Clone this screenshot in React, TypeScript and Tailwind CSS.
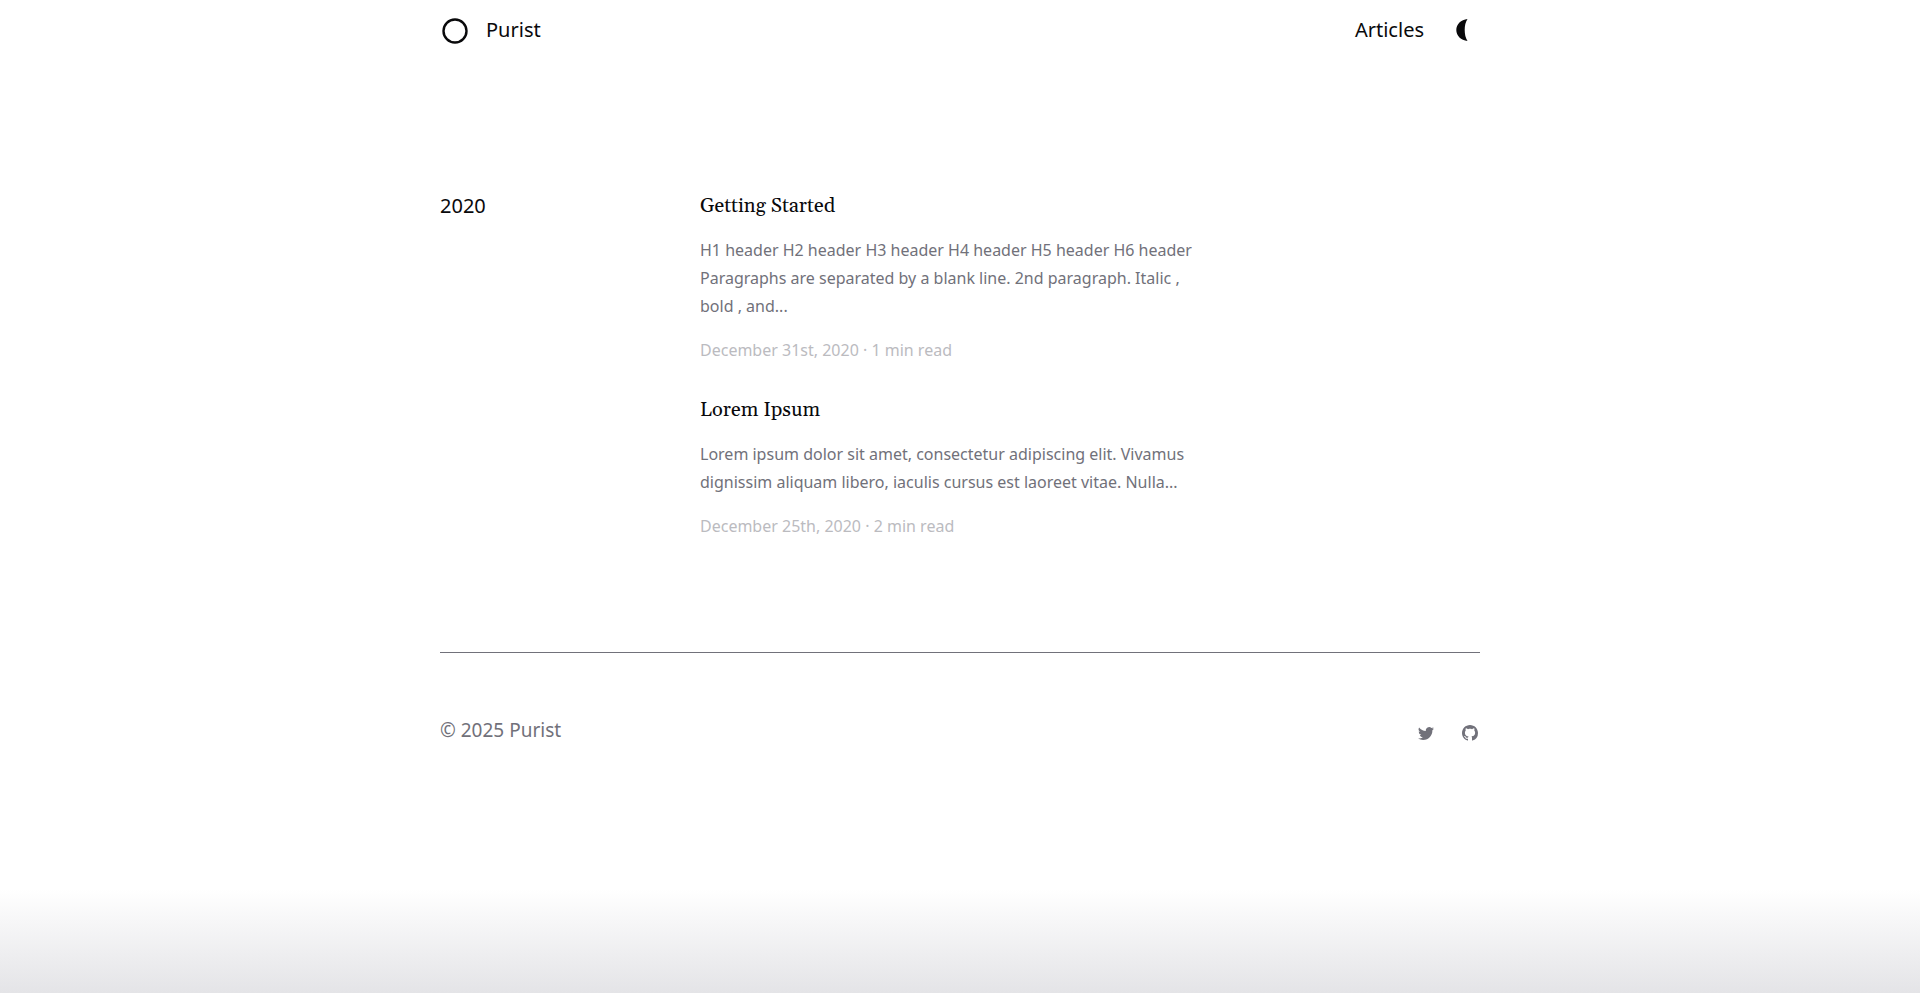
import React from "react";
import { BsGithub, BsTwitter } from "react-icons/bs";

interface Post {
    title: string;
    excerpt: string;
    date: string;
    minutes: number;
}

const posts: Post[] = [
    {
        title: "Getting Started",
        excerpt:
            "H1 header H2 header H3 header H4 header H5 header H6 header Paragraphs are separated by a blank line. 2nd paragraph. Italic , bold , and...",
        date: "December 31st, 2020",
        minutes: 1,
    },
    {
        title: "Lorem Ipsum",
        excerpt:
            "Lorem ipsum dolor sit amet, consectetur adipiscing elit. Vivamus dignissim aliquam libero, iaculis cursus est laoreet vitae. Nulla...",
        date: "December 25th, 2020",
        minutes: 2,
    },
];

const Header: React.FC = () => (
    <header className="flex h-15 items-center justify-between">
        <a href="/" className="flex items-center gap-4">
            <svg viewBox="0 0 30 30" className="h-[30px] w-[30px]" fill="none" aria-hidden="true">
                <circle cx="15" cy="16" r="11.5" stroke="currentColor" strokeWidth="2.4" />
            </svg>
            <span>Purist</span>
        </a>
        <nav className="flex items-center gap-6">
            <a href="/articles">Articles</a>
            <button type="button" aria-label="Toggle dark mode" className="p-1">
                <svg viewBox="0 0 24 24" className="h-6 w-6" fill="currentColor" aria-hidden="true">
                    <path d="M15.5 1C9 1.5 4.3 6.3 4.3 12S9 22.500 15.500 23c-2-3-2.800-6.800-2.800-11s.800-8 2.800-11z" />
                </svg>
            </button>
        </nav>
    </header>
);

const PostItem: React.FC<{ post: Post }> = ({ post }) => (
    <article className="flex flex-col gap-4">
        <h2 className="font-['Gelasio','Georgia','Liberation_Serif',serif]">
            <a href="/articles">{post.title}</a>
        </h2>
        <p className="text-base leading-7 text-[#71717a]">{post.excerpt}</p>
        <p className="text-base leading-7 text-[#bbbbbf]">
            {post.date} · {post.minutes} min read
        </p>
    </article>
);

const Footer: React.FC = () => (
    <footer className="flex items-end justify-between border-t border-[#71717a] py-16 text-[#71717a]">
        <p className="text-[19px] leading-[26px]">© 2025 Purist</p>
        <div className="flex items-center gap-6">
            <a href="https://twitter.com" aria-label="Twitter" className="p-0.5">
                <BsTwitter className="h-4 w-4" />
            </a>
            <a href="https://github.com" aria-label="GitHub" className="p-0.5">
                <BsGithub className="h-4 w-4" />
            </a>
        </div>
    </footer>
);

const App: React.FC = () => {
    return (
        <div className="flex min-h-screen flex-col justify-between bg-white font-['Noto_Sans','Open_Sans',sans-serif] text-xl leading-7 text-[#09090b]">
            <div className="mx-auto w-full max-w-[1040px]">
                <Header />
                <main className="grid grid-cols-4 pt-33 pb-28">
                    <h1>2020</h1>
                    <div className="col-span-2 flex flex-col gap-8 pr-4">
                        {posts.map((post) => (
                            <PostItem key={post.title} post={post} />
                        ))}
                    </div>
                </main>
                <Footer />
            </div>
            <div className="h-26 bg-linear-to-b from-white to-[#e4e4e7]" />
        </div>
    );
};

export default App;
